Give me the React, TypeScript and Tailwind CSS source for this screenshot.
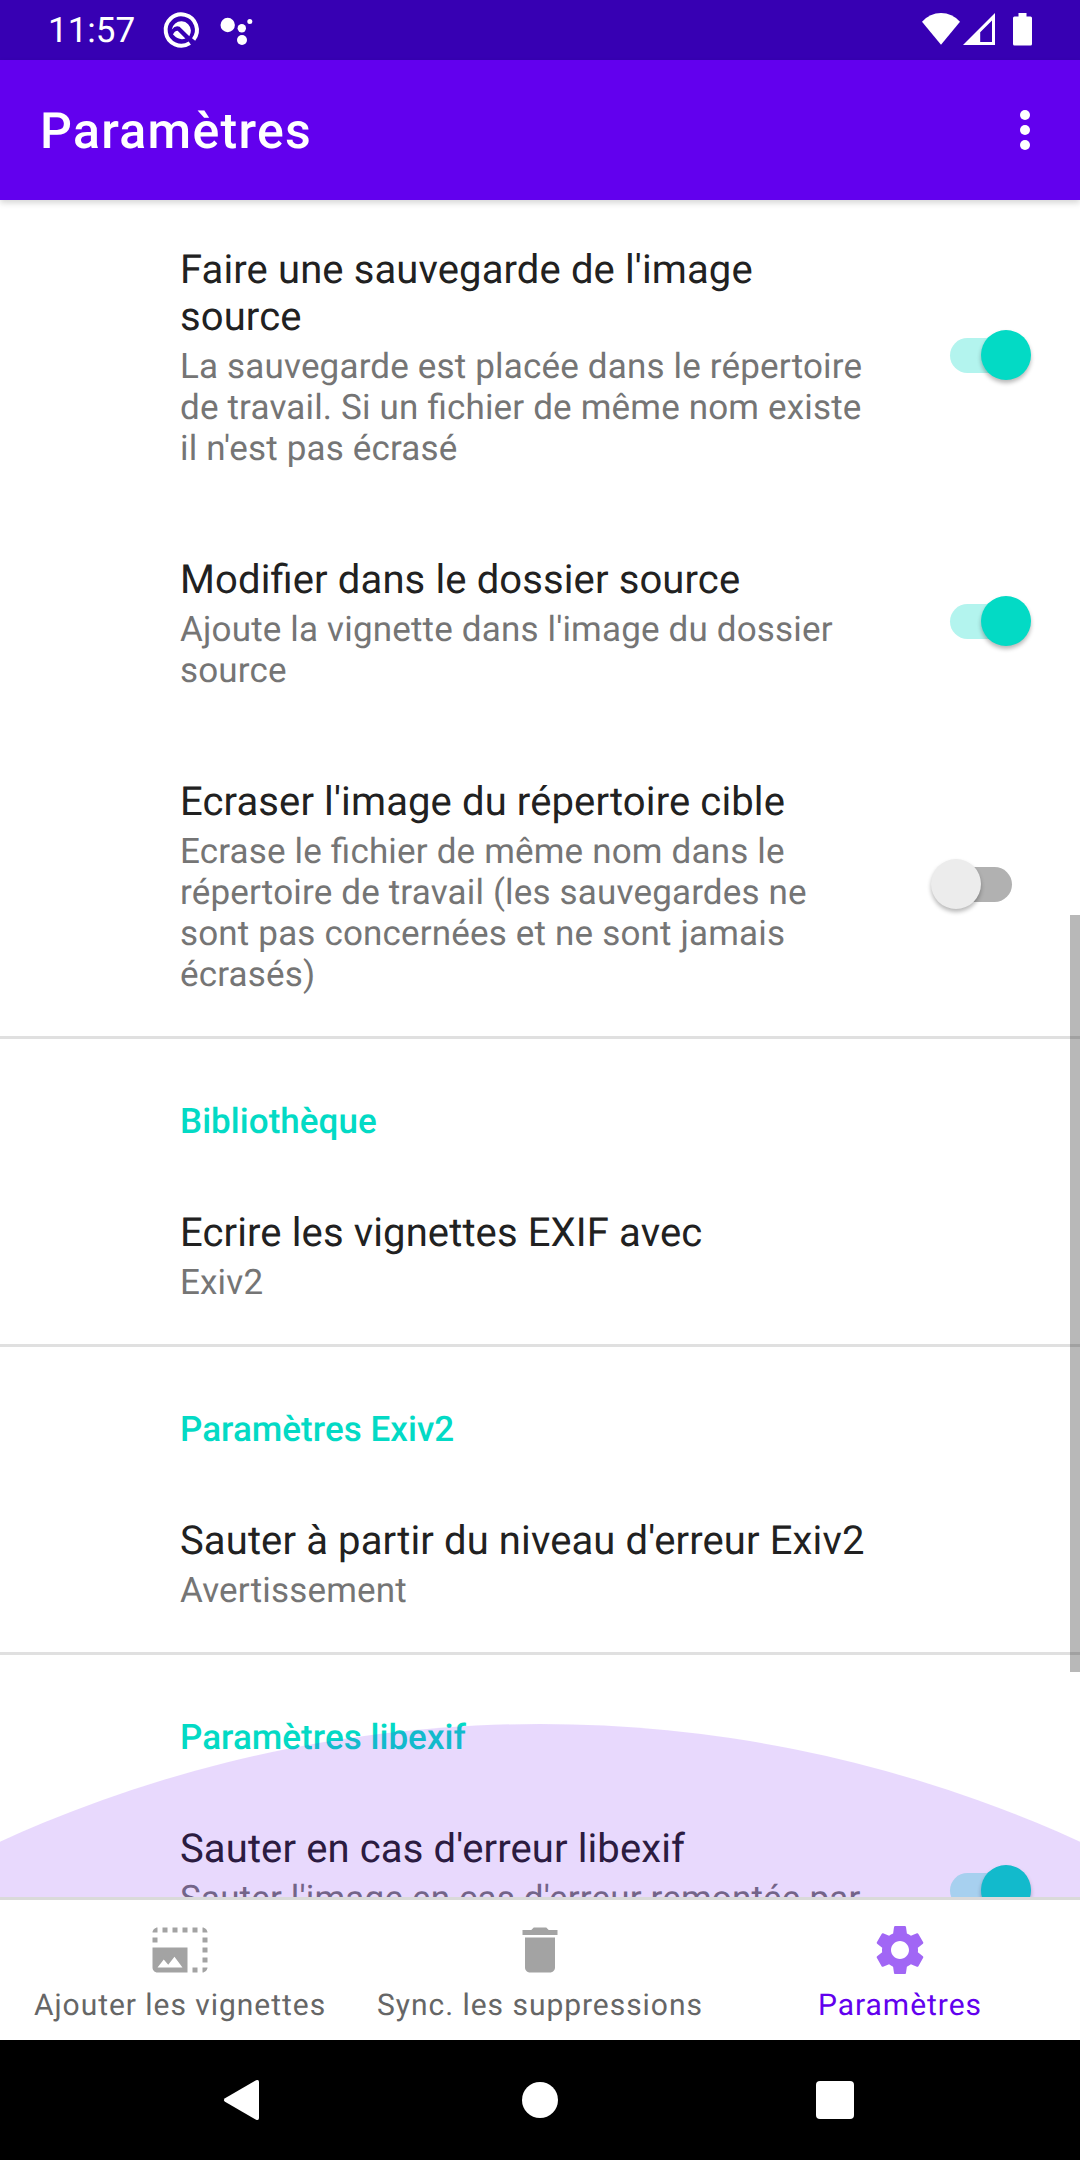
import { MdDelete, MdPhotoSizeSelectLarge, MdSettings } from "react-icons/md";

function StatusBar() {
  return (
    <div className="flex h-[60px] shrink-0 items-center justify-between bg-[#3700b3] pl-12 pr-12 text-white">
      <div className="flex items-center">
        <span className="w-[114px] pt-px text-[35px] leading-[41px]">11:57</span>
        <svg className="h-[40px] w-[40px]" viewBox="0 0 40 40" fill="none">
          <path d="M27.8 33.1A15.6 15.6 0 1 1 31.6 29.6" stroke="#fff" strokeWidth="4" />
          <path d="M9.8 19.6A9.6 9.6 0 0 1 28.9 20.6Q28.9 23.5 27.3 26.2L17.6 16.8Q13.5 14.6 9.8 19.6Z" fill="#fff" />
          <path d="M15.6 20.8L23.4 28.6Q17 31 11 24.6Q12.4 21 15.6 20.8Z" fill="#fff" />
        </svg>
        <svg className="ml-4 h-[40px] w-[40px]" viewBox="218 10 40 40" fill="#fff">
          <circle cx="227.7" cy="25" r="7.2" />
          <circle cx="241.8" cy="28.2" r="4.2" />
          <circle cx="249.8" cy="21.5" r="2.5" />
          <circle cx="242" cy="40" r="5" />
        </svg>
      </div>
      <div className="flex items-center">
        <svg className="h-[40px] w-[40px]" viewBox="921 10 40 40" fill="#fff">
          <path d="M941 44.7L922 21.7Q930 13 941 13T960 21.7Z" />
        </svg>
        <svg className="h-[40px] w-[36px]" viewBox="961 10 36 40" fill="#fff">
          <path fillRule="evenodd" d="M963 45L995 13V45ZM980.2 42V32.3L992 20.5V42Z" />
        </svg>
        <svg className="ml-4 h-[40px] w-[19px]" viewBox="1013 10 19 40" fill="#fff">
          <path d="M1018.5 13H1026.5V16.5H1030.5Q1032 16.5 1032 18V44Q1032 45.5 1030.5 45.5H1014.5Q1013 45.5 1013 44V18Q1013 16.5 1014.5 16.5H1018.5Z" />
        </svg>
      </div>
    </div>
  );
}

function AppBar() {
  return (
    <header className="z-10 flex h-[140px] shrink-0 items-center justify-between bg-[#6200ee] pl-10 pr-[50px] text-white shadow-[0_3px_6px_rgba(0,0,0,0.16)]">
      <h1 className="pt-[4px] text-[50px] font-medium leading-[58px] tracking-[1.3px]">Paramètres</h1>
      <div className="flex flex-col gap-[5px]">
        <span className="size-[10px] rounded-full bg-white" />
        <span className="size-[10px] rounded-full bg-white" />
        <span className="size-[10px] rounded-full bg-white" />
      </div>
    </header>
  );
}

function Switch({ on }: { on: boolean }) {
  return (
    <div
      className={
        on
          ? "relative flex h-[50px] w-[100px] shrink-0 items-center justify-end"
          : "relative flex h-[50px] w-[100px] shrink-0 items-center justify-start"
      }
    >
      <span
        className={
          on
            ? "absolute left-[19px] h-[35px] w-[62px] rounded-full bg-[#b3f4ee]"
            : "absolute left-[19px] h-[35px] w-[62px] rounded-full bg-[#b1b1b1]"
        }
      />
      <span
        className={
          on
            ? "relative size-[50px] rounded-full bg-[#03dac5] shadow-[0_3px_4px_rgba(0,0,0,0.28)]"
            : "relative size-[50px] rounded-full bg-[#ececec] shadow-[0_3px_4px_rgba(0,0,0,0.28)]"
        }
      />
    </div>
  );
}

function Preference({ title, summary, on }: { title: string; summary: string; on?: boolean }) {
  return (
    <div className="flex shrink-0 items-center justify-between pl-[180px] pr-[49px]">
      <div className="whitespace-pre pb-[41px] pt-[46px] [font-feature-settings:'liga'_1]">
        <div className="text-[40px] leading-[47px] tracking-[0.12px] text-[#212121]">{title}</div>
        <div className="mt-[6px] text-[35px] leading-[41px] tracking-[0.17px] text-[#757575]">{summary}</div>
      </div>
      {on !== undefined && <Switch on={on} />}
    </div>
  );
}

function Category({ title }: { title: string }) {
  return (
    <div className="h-[127px] shrink-0 border-t-[3px] border-[#e0e0e0] pl-[180px] pt-[62px] text-[35px] font-medium leading-[41px] tracking-[0.04px] text-[#03dac5]">
      {title}
    </div>
  );
}

function BottomNav() {
  return (
    <nav className="grid h-[143px] shrink-0 grid-cols-3 border-t-[3px] border-[#dadada] bg-white pt-5 text-[30px] leading-[35px] tracking-[0.96px] text-[#666]">
      <div className="flex flex-col items-center gap-2 whitespace-nowrap">
        <MdPhotoSizeSelectLarge className="size-[60px] text-[#a3a3a3]" />
        <span>Ajouter les vignettes</span>
      </div>
      <div className="flex flex-col items-center gap-2 whitespace-nowrap">
        <MdDelete className="size-[60px] text-[#a3a3a3]" />
        <span>Sync. les suppressions</span>
      </div>
      <div className="flex flex-col items-center gap-2 whitespace-nowrap text-[#6200ee]">
        <MdSettings className="size-[60px] text-[#a166f5]" />
        <span>Paramètres</span>
      </div>
    </nav>
  );
}

function SystemNav() {
  return (
    <div className="flex h-[120px] shrink-0 items-center justify-between bg-black pl-[220px] pr-[220px]">
      <svg className="h-[44px] w-[44px]" viewBox="0 0 44 44" fill="#fff">
        <path d="M36 2.3Q39 1 39 4V40Q39 43 36 41.7L5 23.8Q2.8 22 5 20.2Z" />
      </svg>
      <span className="size-[36px] rounded-full bg-white" />
      <div className="flex w-[44px] justify-start">
        <span className="size-[38px] rounded-[4px] bg-white" />
      </div>
    </div>
  );
}

export default function App() {
  return (
    <div className="flex h-[2160px] w-[1080px] flex-col overflow-hidden bg-white font-['Roboto',sans-serif] [text-rendering:geometricPrecision]">
      <StatusBar />
      <AppBar />
      <main className="relative flex min-h-0 flex-1 flex-col overflow-hidden">
        <Preference
          title={"Faire une sauvegarde de l'image\nsource"}
          summary={"La sauvegarde est placée dans le répertoire\nde travail. Si un fichier de même nom existe\nil n'est pas écrasé"}
          on
        />
        <Preference
          title="Modifier dans le dossier source"
          summary={"Ajoute la vignette dans l'image du dossier\nsource"}
          on
        />
        <Preference
          title="Ecraser l'image du répertoire cible"
          summary={"Ecrase le fichier de même nom dans le\nrépertoire de travail (les sauvegardes ne\nsont pas concernées et ne sont jamais\nécrasés)"}
          on={false}
        />
        <Category title="Bibliothèque" />
        <Preference title="Ecrire les vignettes EXIF avec" summary="Exiv2" />
        <Category title="Paramètres Exiv2" />
        <Preference title="Sauter à partir du niveau d'erreur Exiv2" summary="Avertissement" />
        <Category title="Paramètres libexif" />
        <Preference
          title="Sauter en cas d'erreur libexif"
          summary={"Sauter l'image en cas d'erreur remontée par\n "}
          on
        />
        <div className="absolute left-[-758px] top-[1524px] size-[2596px] rounded-full bg-[#6200ee]/15" />
        <div className="absolute right-0 top-[715px] h-[757px] w-[10px] bg-black/28" />
      </main>
      <BottomNav />
      <SystemNav />
    </div>
  );
}
